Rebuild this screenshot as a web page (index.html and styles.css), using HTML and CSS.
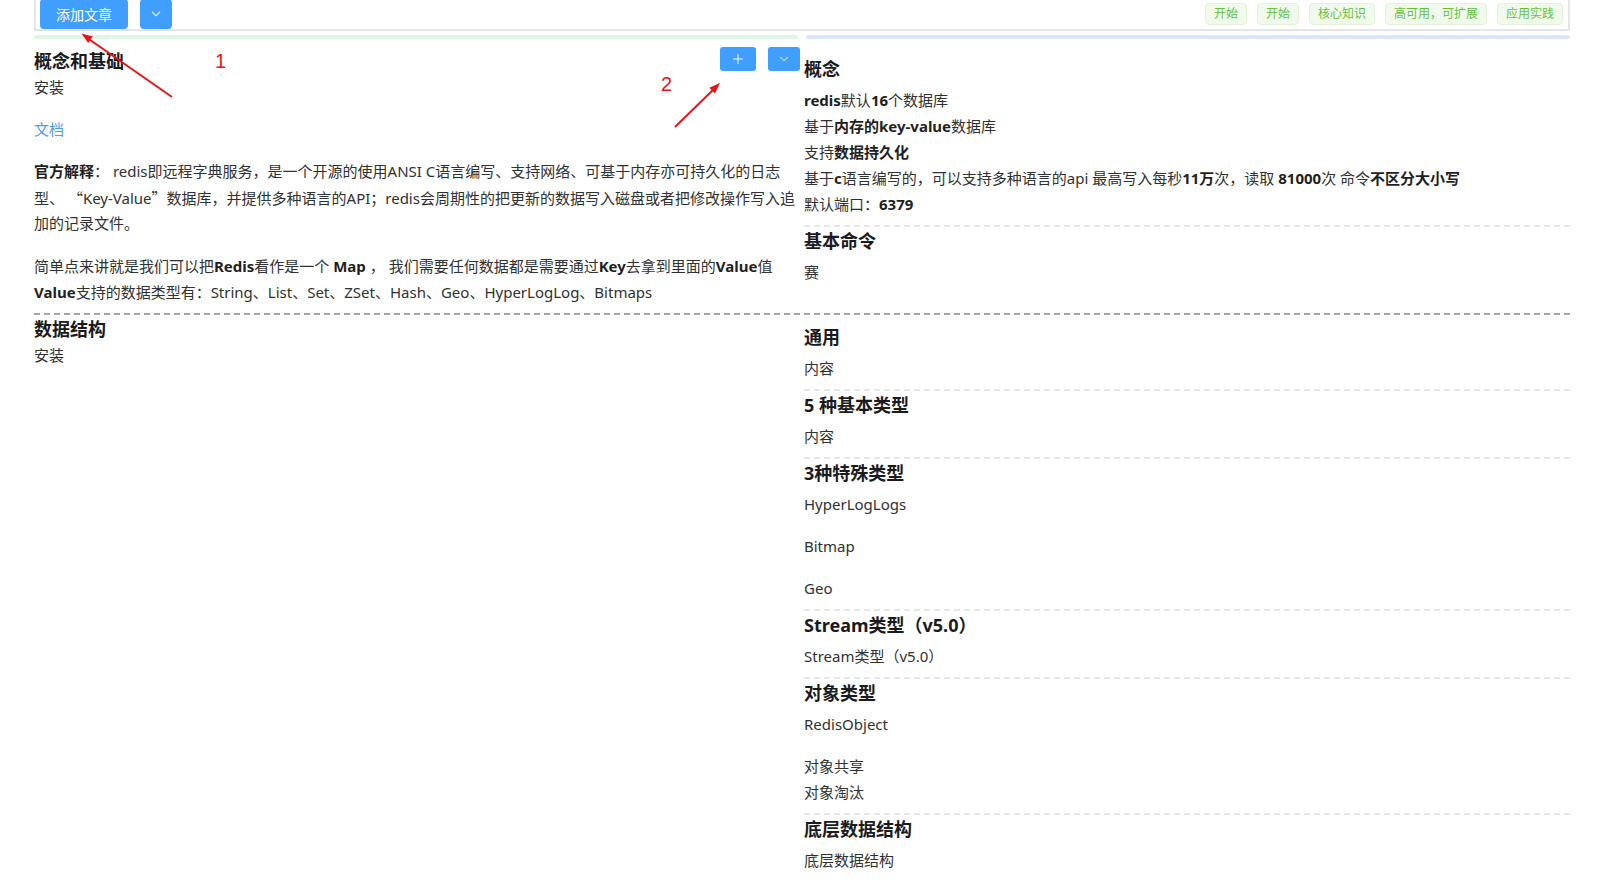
FILE: index.html
```html
<!DOCTYPE html>
<html lang="zh-CN">
<head>
<meta charset="utf-8">
<title>Redis</title>
<link rel="stylesheet" href="styles.css">
</head>
<body>
<div class="page">
  <div class="toolbar">
    <div class="toolbar-left">
      <button class="btn btn-add">添加文章</button>
      <button class="btn btn-drop"><svg width="10" height="6" viewBox="0 0 10 6"><path d="M1 0.8 L5 4.8 L9 0.8" fill="none" stroke="#fff" stroke-width="1.1"/></svg></button>
    </div>
    <div class="tags">
      <span class="tag">开始</span>
      <span class="tag">开始</span>
      <span class="tag">核心知识</span>
      <span class="tag">高可用，可扩展</span>
      <span class="tag">应用实践</span>
    </div>
  </div>

  <div class="bars">
    <div class="bar bar-green"></div>
    <div class="bar bar-blue"></div>
  </div>

  <section class="row">
    <div class="col-left">
      <div class="cat-head">
        <h2 class="cat-title">概念和基础</h2>
        <div class="cat-actions">
          <button class="btn btn-sm btn-plus"><svg width="10" height="10" viewBox="0 0 10 10"><path d="M5 0V10M0 5H10" stroke="rgba(255,255,255,0.9)" stroke-width="1"/></svg></button>
          <button class="btn btn-sm btn-sm-drop"><svg width="10" height="6" viewBox="0 0 10 6"><path d="M1 0.8 L5 4.8 L9 0.8" fill="none" stroke="#fff" stroke-width="1"/></svg></button>
        </div>
      </div>
      <div class="cat-desc">安装</div>
      <div class="rich">
        <p><a class="link" href="#">文档</a></p>
        <p><strong>官方解释</strong>： redis即远程字典服务，是一个开源的使用ANSI C语言编写、支持网络、可基于内存亦可持久化的日志型、 <span class="q">“</span>Key-Value<span class="q">”</span>数据库，并提供多种语言的API；redis会周期性的把更新的数据写入磁盘或者把修改操作写入追加的记录文件。</p>
        <p>简单点来讲就是我们可以把<strong>Redis</strong>看作是一个 <strong>Map</strong> ， 我们需要任何数据都是需要通过<strong>Key</strong>去拿到里面的<strong>Value</strong>值<br><strong>Value</strong>支持的数据类型有：String、List、Set、ZSet、Hash、Geo、HyperLogLog、Bitmaps</p>
      </div>
    </div>
    <div class="col-right">
      <div class="sub">
        <h3 class="sub-title">概念</h3>
        <div class="lines">
          <div><strong>redis</strong>默认<strong>16</strong>个数据库</div>
          <div>基于<strong>内存的key-value</strong>数据库</div>
          <div>支持<strong>数据持久化</strong></div>
          <div>基于<strong>c</strong>语言编写的，可以支持多种语言的api 最高写入每秒<strong>11万</strong>次，读取 <strong>81000</strong>次 命令<strong>不区分大小写</strong></div>
          <div>默认端口：<strong>6379</strong></div>
        </div>
      </div>
      <div class="sub">
        <h3 class="sub-title">基本命令</h3>
        <div class="lines"><p>赛</p></div>
      </div>
    </div>
  </section>

  <section class="row">
    <div class="col-left">
      <div class="cat-head">
        <h2 class="cat-title">数据结构</h2>
      </div>
      <div class="cat-desc">安装</div>
    </div>
    <div class="col-right">
      <div class="sub">
        <h3 class="sub-title">通用</h3>
        <div class="lines"><p>内容</p></div>
      </div>
      <div class="sub">
        <h3 class="sub-title">5 种基本类型</h3>
        <div class="lines"><p>内容</p></div>
      </div>
      <div class="sub">
        <h3 class="sub-title">3种特殊类型</h3>
        <div class="lines">
          <p>HyperLogLogs</p>
          <p>Bitmap</p>
          <p>Geo</p>
        </div>
      </div>
      <div class="sub">
        <h3 class="sub-title">Stream类型（v5.0）</h3>
        <div class="lines"><p>Stream类型（v5.0）</p></div>
      </div>
      <div class="sub">
        <h3 class="sub-title">对象类型</h3>
        <div class="lines">
          <p>RedisObject</p>
          <p>对象共享<br>对象淘汰</p>
        </div>
      </div>
      <div class="sub">
        <h3 class="sub-title">底层数据结构</h3>
        <div class="lines"><p>底层数据结构</p></div>
      </div>
    </div>
  </section>
</div>

<svg class="annotations" width="1613" height="883" viewBox="0 0 1613 883">
  <line x1="172" y1="97" x2="88" y2="38.5" stroke="#e8141b" stroke-width="2"/>
  <polygon points="81.5,33.5 92.8,36.6 88.2,43.1" fill="#e8141b"/>
  <text x="215" y="68" class="anno-num">1</text>
  <line x1="675" y1="127" x2="714" y2="89" stroke="#e8141b" stroke-width="2"/>
  <polygon points="720,83 714.9,93.6 709.3,87.8" fill="#e8141b"/>
  <text x="661" y="91" class="anno-num">2</text>
</svg>
</body>
</html>
```

FILE: styles.css
```css
* { box-sizing: border-box; }

html, body {
  margin: 0;
  padding: 0;
  background: #ffffff;
}

body {
  font-family: "Noto Sans", "Noto Sans CJK SC", sans-serif;
  font-size: 15px;
  color: #303133;
  overflow: hidden;
  position: relative;
  height: 883px;
}

.page {
  padding: 0 43px 0 34px;
}

/* toolbar */
.toolbar {
  margin-top: -3px;
  height: 34px;
  border: 2px solid #e4e5ea;
  display: flex;
  justify-content: space-between;
  align-items: center;
  padding: 0 5px 0 4px;
}

.toolbar-left {
  display: flex;
  gap: 12px;
  height: 30px;
}

.btn {
  border: none;
  background: #409eff;
  color: #fff;
  font-family: inherit;
  border-radius: 4px;
  display: flex;
  align-items: center;
  justify-content: center;
  padding: 0;
  cursor: pointer;
}

.btn-add {
  height: 30px;
  padding: 0 16px;
  font-size: 14px;
}

.btn-drop {
  height: 30px;
  width: 32px;
}

.tags {
  display: flex;
  gap: 10px;
}

.tag {
  height: 22px;
  line-height: 20px;
  padding: 0 8px;
  font-size: 12px;
  color: #67c23a;
  background: #f0f9eb;
  border: 1px solid #e1f3d8;
  border-radius: 4px;
}

/* colored bars */
.bars {
  display: grid;
  grid-template-columns: 1fr 1fr;
  margin-top: 4px;
  margin-bottom: 8px;
}

.bar {
  height: 4px;
  border-radius: 2px;
}

.bar-green {
  background: #def7e4;
  margin-right: 4px;
}

.bar-blue {
  background: #dae7fb;
  margin-left: 4px;
}

/* rows */
.row {
  display: grid;
  grid-template-columns: 1fr 1fr;
  padding-bottom: 10px;
  background: repeating-linear-gradient(90deg, #a3a6ae 0 6px, transparent 6px 10px) left bottom / 100% 2px no-repeat;
}

.col-left {
  padding-right: 2px;
}

.col-right {
  padding-left: 2px;
  padding-top: 8px;
}

.cat-head {
  display: flex;
  justify-content: space-between;
  align-items: flex-start;
}

.cat-title {
  margin: 0;
  font-size: 18px;
  line-height: 28px;
  font-weight: 700;
  color: #1b1b1d;
}

.cat-actions {
  display: flex;
  gap: 12px;
}

.btn-sm {
  height: 24px;
  border-radius: 3px;
}

.btn-plus { width: 36px; }
.btn-sm-drop { width: 32px; }

.cat-desc {
  line-height: 25.6px;
}

.rich {
  margin-top: 16px;
  line-height: 25.6px;
}

.rich p {
  margin: 0;
}

.rich p + p {
  margin-top: 17px;
}

.rich strong,
.lines strong {
  font-weight: 700;
  color: #1f1f22;
}

.link {
  color: #4a9cf5;
  text-decoration: none;
}

.q {
  font-family: "Noto Sans CJK SC", sans-serif;
  display: inline-block;
  width: 15px;
  text-align: center;
}

/* sub sections (right column) */
.sub {
  padding-bottom: 8px;
}

.sub:not(:last-child) {
  padding-bottom: 10px;
  background: repeating-linear-gradient(90deg, #e6e7eb 0 6px, transparent 6px 10px) left bottom / 100% 2px no-repeat;
}

.sub-title {
  margin: 0;
  font-size: 18px;
  line-height: 28px;
  font-weight: 700;
  color: #1b1b1d;
}

.lines {
  margin-top: 4px;
  line-height: 26px;
}

.lines p {
  margin: 0;
}

.lines p + p {
  margin-top: 16px;
}

/* annotations overlay */
.annotations {
  position: absolute;
  left: 0;
  top: 0;
  pointer-events: none;
}

.anno-num {
  font-family: "Liberation Sans", sans-serif;
  font-size: 20px;
  fill: #e8141b;
}
```
